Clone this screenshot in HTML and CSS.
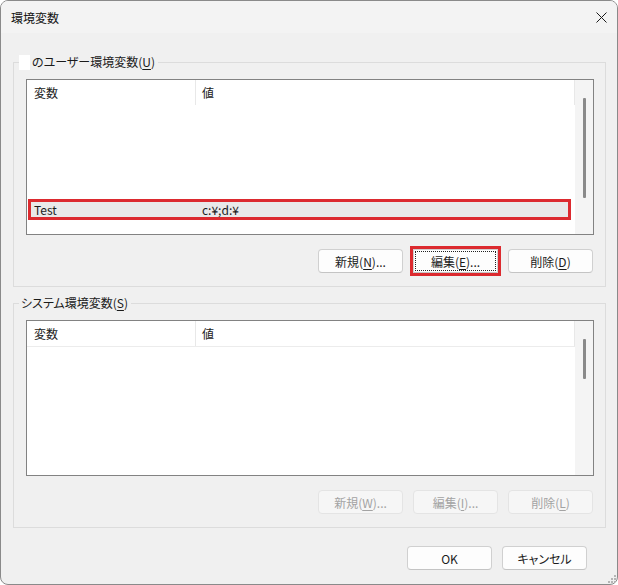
FILE: index.html
```html
<!DOCTYPE html>
<html lang="ja">
<head>
<meta charset="utf-8">
<title>環境変数</title>
<link rel="stylesheet" href="styles.css">
</head>
<body>
<div class="window">
  <div class="titlebar">
    <span class="title">環境変数</span>
    <svg class="close" viewBox="0 0 11 11" width="11" height="11"><path d="M0.5 0.5 L10.5 10.5 M10.5 0.5 L0.5 10.5" stroke="#1a1a1a" stroke-width="1" fill="none"/></svg>
  </div>

  <div class="group">
    <div class="group-title"><span class="redact"></span>のユーザー環境変数(<u>U</u>)</div>
    <div class="list">
      <div class="list-main">
        <div class="list-head"><div class="col col-name">変数</div><div class="col col-value">値</div></div>
        <div class="rows">
          <div class="row selected"><div class="col col-name">Test</div><div class="col col-value">c:¥;d:¥</div></div>
        </div>
      </div>
      <div class="scrollbar"><div class="thumb thumb-long"></div></div>
    </div>
    <div class="buttons">
      <button class="btn">新規(<u>N</u>)...</button>
      <span class="focus-ring"><button class="btn focused">編集(<u>E</u>)...</button></span>
      <button class="btn">削除(<u>D</u>)</button>
    </div>
  </div>

  <div class="group group-system">
    <div class="group-title title-system">システム環境変数(<u>S</u>)</div>
    <div class="list">
      <div class="list-main">
        <div class="list-head head-lined"><div class="col col-name">変数</div><div class="col col-value">値</div></div>
        <div class="rows"></div>
      </div>
      <div class="scrollbar"><div class="thumb thumb-short"></div></div>
    </div>
    <div class="buttons">
      <button class="btn" disabled>新規(<u>W</u>)...</button>
      <button class="btn" disabled>編集(<u>I</u>)...</button>
      <button class="btn" disabled>削除(<u>L</u>)</button>
    </div>
  </div>

  <div class="footer">
    <button class="btn">OK</button>
    <button class="btn">キャンセル</button>
  </div>

  <svg class="grip" viewBox="0 0 9 9" width="9" height="9">
    <rect x="7" y="1" width="2" height="2" fill="#b5b5b5"/>
    <rect x="4" y="4" width="2" height="2" fill="#b5b5b5"/>
    <rect x="7" y="4" width="2" height="2" fill="#b5b5b5"/>
    <rect x="1" y="7" width="2" height="2" fill="#b5b5b5"/>
    <rect x="4" y="7" width="2" height="2" fill="#b5b5b5"/>
    <rect x="7" y="7" width="2" height="2" fill="#b5b5b5"/>
  </svg>
</div>
</body>
</html>
```

FILE: styles.css
```css
html, body {
  margin: 0;
  background: #ffffff;
}

body {
  font-family: "Noto Sans CJK JP", "Noto Sans", sans-serif;
  font-size: 12px;
  color: #1b1b1b;
}

u {
  text-decoration: underline;
  text-underline-offset: 2px;
}

.window {
  width: 618px;
  height: 585px;
  box-sizing: border-box;
  border: 1px solid #8a8a8a;
  border-radius: 8px;
  background: #f0f0f0;
  overflow: hidden;
  position: relative;
  display: flex;
  flex-direction: column;
}

.titlebar {
  height: 32px;
  flex: none;
  display: flex;
  align-items: center;
  justify-content: space-between;
  padding: 0 10px 0 10px;
  background: #f3f3f3;
  color: #111;
}

.close {
  display: block;
}

.group {
  margin: 29px 11px 0 12px;
  border: 1px solid #dcdcdc;
  padding: 0 11px 13px 12px;
}

.group + .group {
  margin-top: 16px;
}

.group-title {
  margin: -9px 0 0 -7px;
  height: 16px;
  line-height: 16px;
  width: fit-content;
  background: #f0f0f0;
  padding-right: 3px;
  display: flex;
  align-items: center;
  font-feature-settings: "palt";
}

.title-system {
  padding-left: 2px;
}

.redact {
  display: inline-block;
  width: 11px;
  height: 15px;
  background: #ffffff;
  margin-right: 2px;
}

.list {
  margin-top: 9px;
  height: 156px;
  box-sizing: border-box;
  border: 1px solid #828282;
  background: #ffffff;
  display: flex;
}

.list-main {
  flex: 1;
  display: flex;
  flex-direction: column;
  min-width: 0;
}

.list-head {
  height: 25px;
  flex: none;
  display: flex;
  align-items: center;
  border-right: 1px solid #e8e8e8;
}

.head-lined {
  height: 26px;
  box-sizing: border-box;
  border-bottom: 1px solid #ececec;
}

.col {
  box-sizing: border-box;
  white-space: nowrap;
}

.list-head .col-name {
  width: 169px;
  padding-left: 7px;
  height: 100%;
  display: flex;
  align-items: center;
  border-right: 1px solid #e8e8e8;
}

.list-head .col-value {
  padding-left: 6px;
}

.rows {
  flex: 1;
  display: flex;
  flex-direction: column;
  justify-content: flex-end;
  padding-bottom: 14px;
}

.row {
  display: flex;
  align-items: center;
  height: 21px;
  box-sizing: border-box;
  margin: 0 4px 0 1px;
}

.row.selected {
  border: 3px solid #dc2a2f;
  background: #e9e9e9;
}

.row .col-name {
  width: 165px;
  padding-left: 3px;
}

.row .col-value {
  padding-left: 6px;
}

.scrollbar {
  width: 18px;
  flex: none;
  background: #f4f4f4;
  display: flex;
  flex-direction: column;
  align-items: center;
}

.thumb {
  width: 3px;
  margin-top: 18px;
  background: #8a8a8a;
  border-radius: 1px;
}

.thumb-long {
  height: 100px;
}

.thumb-short {
  height: 40px;
}

.buttons {
  display: flex;
  justify-content: flex-end;
  gap: 10px;
  margin-top: 14px;
  padding-right: 1px;
}

.btn {
  width: 85px;
  height: 24px;
  box-sizing: border-box;
  border: 1px solid #d0d0d0;
  border-bottom-color: #c4c4c4;
  border-radius: 4px;
  background: #fdfdfd;
  font: inherit;
  color: #1b1b1b;
  padding: 0;
  display: flex;
  align-items: center;
  justify-content: center;
  position: relative;
  font-feature-settings: "palt";
}

.focus-ring {
  display: flex;
  margin: -3px;
  border: 3px solid #dc2a2f;
}

.btn.focused {
  border-radius: 1px;
}

.btn.focused::after {
  content: "";
  position: absolute;
  inset: 1px;
  border: 1px dotted #222;
}

.btn:disabled {
  color: #a3a3a3;
  background: #f6f6f6;
  border-color: #e4e4e4;
}

.footer {
  display: flex;
  justify-content: flex-end;
  gap: 10px;
  margin-top: 18px;
  padding-right: 30px;
}

.grip {
  position: absolute;
  right: 1px;
  bottom: 1px;
}
```
